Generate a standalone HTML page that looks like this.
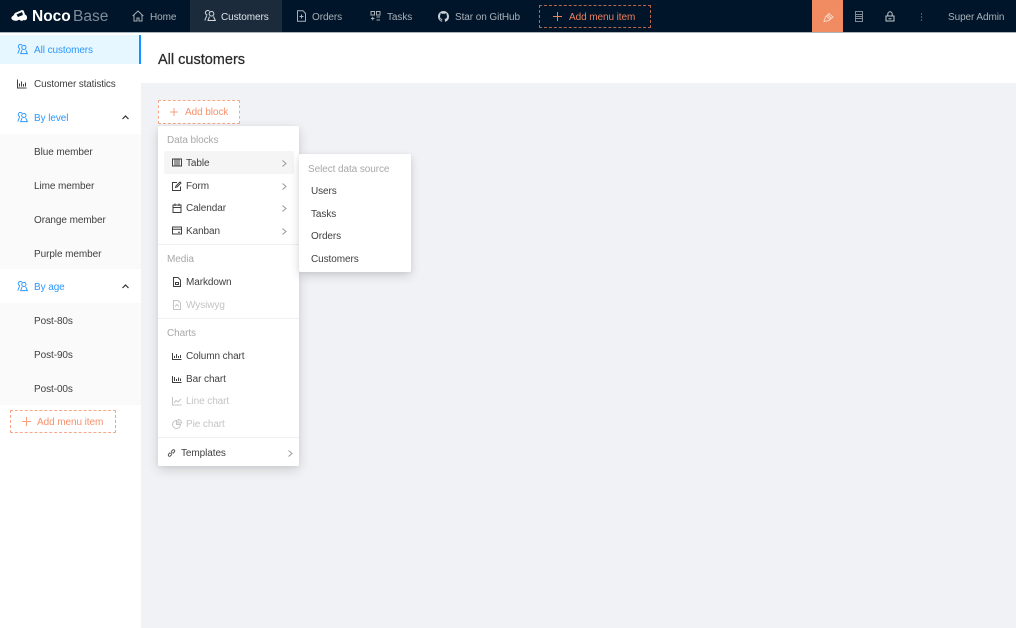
<!DOCTYPE html>
<html><head><meta charset="utf-8"><style>
html,body{margin:0;padding:0;width:1016px;height:628px;overflow:hidden;background:#f0f2f5}
body{position:relative;font-family:"Liberation Sans","Noto Sans CJK SC",sans-serif;font-size:10px;letter-spacing:-.08px;color:#3b3b3b}
.a{position:absolute}
.t{position:absolute;white-space:nowrap;line-height:14px;height:14px;margin-top:1px}
.i{position:absolute;fill:none;stroke:currentColor;stroke-width:1}
.n{color:#a9b0b8}
.b{color:#2a97ff}
.g{color:#a8a8a8}
.d{color:#c4c4c4}
.k{color:#3f3f3f}
</style></head><body>
<div class="a" style="left:0;top:0;width:1016px;height:32px;background:#001529;border-bottom:1px solid #a9b4bd"></div>
<div class="a" style="left:190px;top:0;width:92px;height:32px;background:#1b2b3c"></div>
<div class="a" style="left:812px;top:0;width:31px;height:32px;background:#f18b62"></div>

<svg class="a" style="left:10px;top:8px" width="19" height="16" viewBox="0 0 19 16"><path d="M1.500 11 Q1 8.500 3 8 L5 5 L12 2 Q13.500 2 14 3.500 L15 6.500 Q17.500 7.500 17 10.500 Q16 13 13.500 12 Q12.500 13.500 10.500 12.500 Q9 11 7.500 12.500 Q4 13.500 1.500 11Z" fill="#fff"/><path d="M6.500 6.500 L12 4 L13 7 L8 9Z" fill="#001529"/></svg>
<span class="t" style="left:32px;top:8px;margin-top:0;font-size:15.500px;letter-spacing:0;line-height:17px;height:17px;font-weight:700;color:#fff">Noco</span>
<span class="t" style="left:73px;top:8px;margin-top:0;font-size:15.500px;letter-spacing:0;line-height:17px;height:17px;color:#7f8b98">Base</span>

<svg class="i n" style="left:132px;top:10px" width="12" height="12" viewBox="0 0 12 12"><path d="M.7 6 6 1l5.300 5M2 5v6h3V8h2v3h3V5"/></svg>
<span class="t n" style="left:150px;top:10px">Home</span>
<svg class="i" style="left:204px;top:10px;color:#d4dade" width="12" height="12" viewBox="0 0 12 12"><path d="M5.500 1.300A2.300 2.300 0 1 0 3.300 5 M2.800 5.500.8 10.500M8 1.500a2.300 2.300 0 1 1-1 4.500 2.300 2.300 0 0 1 1-4.500zM5.500 6.500 4 10.500h7.300L9.500 6.500"/></svg>
<span class="t" style="left:221px;top:10px;color:#dfe4e8">Customers</span>
<svg class="i n" style="left:296px;top:10px" width="11" height="12" viewBox="0 0 11 12"><path d="M1.500.7h5.500l2.500 2.800v7.800h-8zM3.500 6.500h4M5.500 4.500v4"/></svg>
<span class="t n" style="left:312px;top:10px">Orders</span>
<svg class="i n" style="left:370px;top:10px" width="11" height="12" viewBox="0 0 11 12"><path d="M1 1.500h3.500v3.500H1zM6.500 1.500H10v3.500H6.500zM1 8.500h3.500M2.700 6.800v3.500M6.500 7h3.500M6.500 10h3.500"/></svg>
<span class="t n" style="left:387px;top:10px">Tasks</span>
<svg class="a" style="left:438px;top:11px" width="11" height="11" viewBox="0 0 16 16"><path fill="#c9d0d6" d="M8 0C3.580 0 0 3.580 0 8c0 3.540 2.290 6.530 5.470 7.590.4.070.55-.17.55-.38v-1.340c-2.230.48-2.700-1.070-2.700-1.070-.36-.92-.89-1.170-.89-1.170-.73-.5.050-.49.050-.49.810.06 1.230.83 1.230.83.710 1.220 1.870.87 2.330.66.070-.52.280-.87.510-1.070-1.780-.2-3.640-.89-3.640-3.950 0-.87.310-1.590.82-2.150-.08-.2-.36-1.020.08-2.120 0 0 .67-.21 2.200.82a7.600 7.600 0 0 1 4 0c1.530-1.040 2.200-.82 2.200-.82.440 1.100.16 1.920.08 2.120.51.560.82 1.270.82 2.150 0 3.070-1.870 3.750-3.650 3.950.29.250.54.730.54 1.480v2.200c0 .21.150.46.550.38A8 8 0 0 0 16 8c0-4.420-3.580-8-8-8z"/></svg>
<span class="t n" style="left:455px;top:10px">Star on GitHub</span>
<div class="a" style="left:539px;top:5px;width:110px;height:21px;border:1px dashed #b8674a"></div>
<svg class="i" style="left:553px;top:12px;color:#f0805a" width="9" height="9" viewBox="0 0 9 9"><path d="M4.500 0v9M0 4.500h9"/></svg>
<span class="t" style="left:569px;top:10px;color:#f0805a">Add menu item</span>
<svg class="i" style="left:823px;top:12px;color:#fbd6c5" width="11" height="10" viewBox="0 0 11 10"><path d="M1 9.500 2.500 5 6 1.500 10 5 6 8.500zM3.500 4 7 7.500M5 3 8.500 6.500"/></svg>
<svg class="i n" style="left:855px;top:11px;color:#7f8c98" width="8" height="11" viewBox="0 0 8 11"><path d="M.5.500h7v10h-7zM.5 3.500h7M.5 5.500h7M.5 7.500h7"/></svg>
<svg class="i" style="left:885px;top:11px;color:#c4cbd2" width="10" height="11" viewBox="0 0 10 11"><path d="M1 5h8v5H1zM2.800 5V3a2.200 2.200 0 0 1 4.400 0v2M3.500 7.800h3"/></svg>
<svg class="a" style="left:920px;top:13px" width="3" height="8"><circle cx="1.500" cy="1" r=".6" fill="#8b96a0"/><circle cx="1.500" cy="4" r=".6" fill="#8b96a0"/><circle cx="1.500" cy="7" r=".6" fill="#8b96a0"/></svg>
<span class="t n" style="left:948px;top:10px">Super Admin</span>

<div class="a" style="left:0;top:33px;width:141px;height:595px;background:#fff"></div>
<div class="a" style="left:0;top:35px;width:141px;height:29px;background:#e6f7ff"></div>
<div class="a" style="left:139px;top:35px;width:2px;height:29px;background:#1890ff"></div>
<div class="a" style="left:0;top:134px;width:141px;height:135px;background:#fafafa"></div>
<div class="a" style="left:0;top:303px;width:141px;height:102px;background:#fafafa"></div>

<svg class="i b" style="left:17px;top:44px" width="11" height="11" viewBox="0 0 12 12"><path d="M5.500 1.300A2.300 2.300 0 1 0 3.300 5 M2.800 5.500.8 10.500M8 1.500a2.300 2.300 0 1 1-1 4.500 2.300 2.300 0 0 1 1-4.500zM5.500 6.500 4 10.500h7.300L9.500 6.500"/></svg>
<span class="t b" style="left:34px;top:43px">All customers</span>
<svg class="i k" style="left:17px;top:78px" width="10" height="11" viewBox="0 0 10 10"><path d="M.5 1v8.500h9M2.500 8V5M4.500 8V3M6.500 8V5.500M8.500 8V4"/></svg>
<span class="t k" style="left:34px;top:77px;letter-spacing:-.15px">Customer statistics</span>
<svg class="i b" style="left:17px;top:112px" width="11" height="11" viewBox="0 0 12 12"><path d="M5.500 1.300A2.300 2.300 0 1 0 3.300 5 M2.800 5.500.8 10.500M8 1.500a2.300 2.300 0 1 1-1 4.500 2.300 2.300 0 0 1 1-4.500zM5.500 6.500 4 10.500h7.300L9.500 6.500"/></svg>
<span class="t b" style="left:34px;top:111px">By level</span>
<svg class="i" style="left:122px;top:115px;color:#333;stroke-width:1.200" width="7" height="5" viewBox="0 0 7 5"><path d="M.5 4 3.500 1 6.500 4"/></svg>
<span class="t k" style="left:34px;top:145px">Blue member</span>
<span class="t k" style="left:34px;top:179px">Lime member</span>
<span class="t k" style="left:34px;top:213px">Orange member</span>
<span class="t k" style="left:34px;top:247px">Purple member</span>
<svg class="i b" style="left:17px;top:281px" width="11" height="11" viewBox="0 0 12 12"><path d="M5.500 1.300A2.300 2.300 0 1 0 3.300 5 M2.800 5.500.8 10.500M8 1.500a2.300 2.300 0 1 1-1 4.500 2.300 2.300 0 0 1 1-4.500zM5.500 6.500 4 10.500h7.300L9.500 6.500"/></svg>
<span class="t b" style="left:34px;top:280px">By age</span>
<svg class="i" style="left:122px;top:284px;color:#333;stroke-width:1.200" width="7" height="5" viewBox="0 0 7 5"><path d="M.5 4 3.500 1 6.500 4"/></svg>
<span class="t k" style="left:34px;top:314px">Post-80s</span>
<span class="t k" style="left:34px;top:348px">Post-90s</span>
<span class="t k" style="left:34px;top:382px">Post-00s</span>
<div class="a" style="left:10px;top:410px;width:104px;height:21px;border:1px dashed #f6a98a;border-radius:1px"></div>
<svg class="i" style="left:22px;top:417px;color:#f6a080" width="9" height="9" viewBox="0 0 9 9"><path d="M4.500 0v9M0 4.500h9"/></svg>
<span class="t" style="left:37px;top:415px;color:#f6916c">Add menu item</span>

<div class="a" style="left:141px;top:33px;width:875px;height:50px;background:#fff"></div>
<span class="t" style="left:158px;top:50px;font-size:14.500px;letter-spacing:0;line-height:18px;height:18px;color:#2b2b2b;-webkit-text-stroke:.25px #2b2b2b">All customers</span>

<div class="a" style="left:158px;top:100px;width:80px;height:22px;background:#fff;border:1px dashed #f6a98a;border-radius:1px"></div>
<svg class="i" style="left:170px;top:108px;color:#f6a080" width="8" height="8" viewBox="0 0 8 8"><path d="M4 0v8M0 4h8"/></svg>
<span class="t" style="left:185px;top:105px;color:#f6916c">Add block</span>

<div class="a" style="left:158px;top:126px;width:141px;height:340px;background:#fff;box-shadow:0 4px 12px rgba(0,0,0,.14),0 1px 4px rgba(0,0,0,.06);border-radius:1.500px"></div>
<div class="a" style="left:164px;top:151px;width:130px;height:23px;background:#f5f5f5;border-radius:2px"></div>
<div class="a" style="left:158px;top:244px;width:141px;height:1px;background:#f0f0f0"></div>
<div class="a" style="left:158px;top:318px;width:141px;height:1px;background:#f0f0f0"></div>
<div class="a" style="left:158px;top:437px;width:141px;height:1px;background:#f0f0f0"></div>

<span class="t g" style="left:167px;top:133px">Data blocks</span>
<svg class="i k" style="left:172px;top:158px" width="10" height="9" viewBox="0 0 10 9"><path d="M.5 1h9v7h-9zM3 1v7M5 1v7M7 1v7"/></svg>
<span class="t k" style="left:186px;top:156px">Table</span>
<svg class="i k" style="left:172px;top:181px" width="10" height="10" viewBox="0 0 10 10"><path d="M8.500 5.500v4h-8v-8h4.500M3.500 6.500 4 5l4-4 1 1-4 4z"/></svg>
<span class="t k" style="left:186px;top:179px">Form</span>
<svg class="i k" style="left:172px;top:203px" width="10" height="10" viewBox="0 0 10 10"><path d="M1 2h8v7.500H1zM1 4.500h8M3 .5v2.500M7 .5v2.500"/></svg>
<span class="t k" style="left:186px;top:201px">Calendar</span>
<svg class="i k" style="left:172px;top:226px" width="10" height="9" viewBox="0 0 10 9"><path d="M.5 1h9v7h-9zM.5 3.300h9M6 6.300h2"/></svg>
<span class="t k" style="left:186px;top:224px">Kanban</span>
<svg class="i" style="left:282px;top:160px;color:#999" width="5" height="7" viewBox="0 0 5 7"><path d="M.5.500 4 3.500.5 6.500"/></svg>
<svg class="i" style="left:282px;top:183px;color:#999" width="5" height="7" viewBox="0 0 5 7"><path d="M.5.500 4 3.500.5 6.500"/></svg>
<svg class="i" style="left:282px;top:205px;color:#999" width="5" height="7" viewBox="0 0 5 7"><path d="M.5.500 4 3.500.5 6.500"/></svg>
<svg class="i" style="left:282px;top:228px;color:#999" width="5" height="7" viewBox="0 0 5 7"><path d="M.5.500 4 3.500.5 6.500"/></svg>
<span class="t g" style="left:167px;top:252px">Media</span>
<svg class="i k" style="left:173px;top:277px" width="8" height="10" viewBox="0 0 8 10"><path d="M.5.500h4.500l2.500 2.500v6.500h-7zM2.500 5.500h3v2h-3z"/></svg>
<span class="t k" style="left:186px;top:275px">Markdown</span>
<svg class="i d" style="left:173px;top:300px" width="8" height="10" viewBox="0 0 8 10"><path d="M.5.500h4.500l2.500 2.500v6.500h-7zM2 6.500 4 4.500 6 6.500"/></svg>
<span class="t d" style="left:186px;top:298px">Wysiwyg</span>
<span class="t g" style="left:167px;top:326px">Charts</span>
<svg class="i k" style="left:172px;top:351px" width="10" height="10" viewBox="0 0 10 10"><path d="M.5 2v6.500h9M2.500 7V5M4.500 7V3M6.500 7V5M8.500 7V4"/></svg>
<span class="t k" style="left:186px;top:349px">Column chart</span>
<svg class="i k" style="left:172px;top:374px" width="10" height="10" viewBox="0 0 10 10"><path d="M.5 2v6.500h9M2.500 7V3M4.500 7V5M6.500 7V3.500M8.500 7V4.500"/></svg>
<span class="t k" style="left:186px;top:372px">Bar chart</span>
<svg class="i d" style="left:172px;top:396px" width="10" height="10" viewBox="0 0 10 10"><path d="M.5 1v8h9M2 7l2-2.500 2 1.500 3-3"/></svg>
<span class="t d" style="left:186px;top:394px">Line chart</span>
<svg class="i d" style="left:172px;top:419px" width="10" height="10" viewBox="0 0 10 10"><path d="M4.500 1.500a4 4 0 1 0 4 4h-4zM6 .5a3.500 3.500 0 0 1 3.500 3.500H6z"/></svg>
<span class="t d" style="left:186px;top:417px">Pie chart</span>
<svg class="i k" style="left:167px;top:448px" width="9" height="10" viewBox="0 0 10 10"><path d="M4 6 6 4M3.500 4.500 1.500 6.500a1.500 1.500 0 0 0 2 2L5.500 6.500M4.500 3.500l2-2a1.500 1.500 0 0 1 2 2L6.500 5.500"/></svg>
<span class="t k" style="left:181px;top:446px">Templates</span>
<svg class="i" style="left:288px;top:450px;color:#999" width="5" height="7" viewBox="0 0 5 7"><path d="M.5.500 4 3.500.5 6.500"/></svg>

<div class="a" style="left:299px;top:154px;width:112px;height:118px;background:#fff;box-shadow:0 4px 10px rgba(0,0,0,.14),0 1px 4px rgba(0,0,0,.06);border-radius:1.500px"></div>
<span class="t g" style="left:308px;top:162px">Select data source</span>
<span class="t k" style="left:311px;top:184px">Users</span>
<span class="t k" style="left:311px;top:207px">Tasks</span>
<span class="t k" style="left:311px;top:229px">Orders</span>
<span class="t k" style="left:311px;top:252px">Customers</span>
</body></html>
